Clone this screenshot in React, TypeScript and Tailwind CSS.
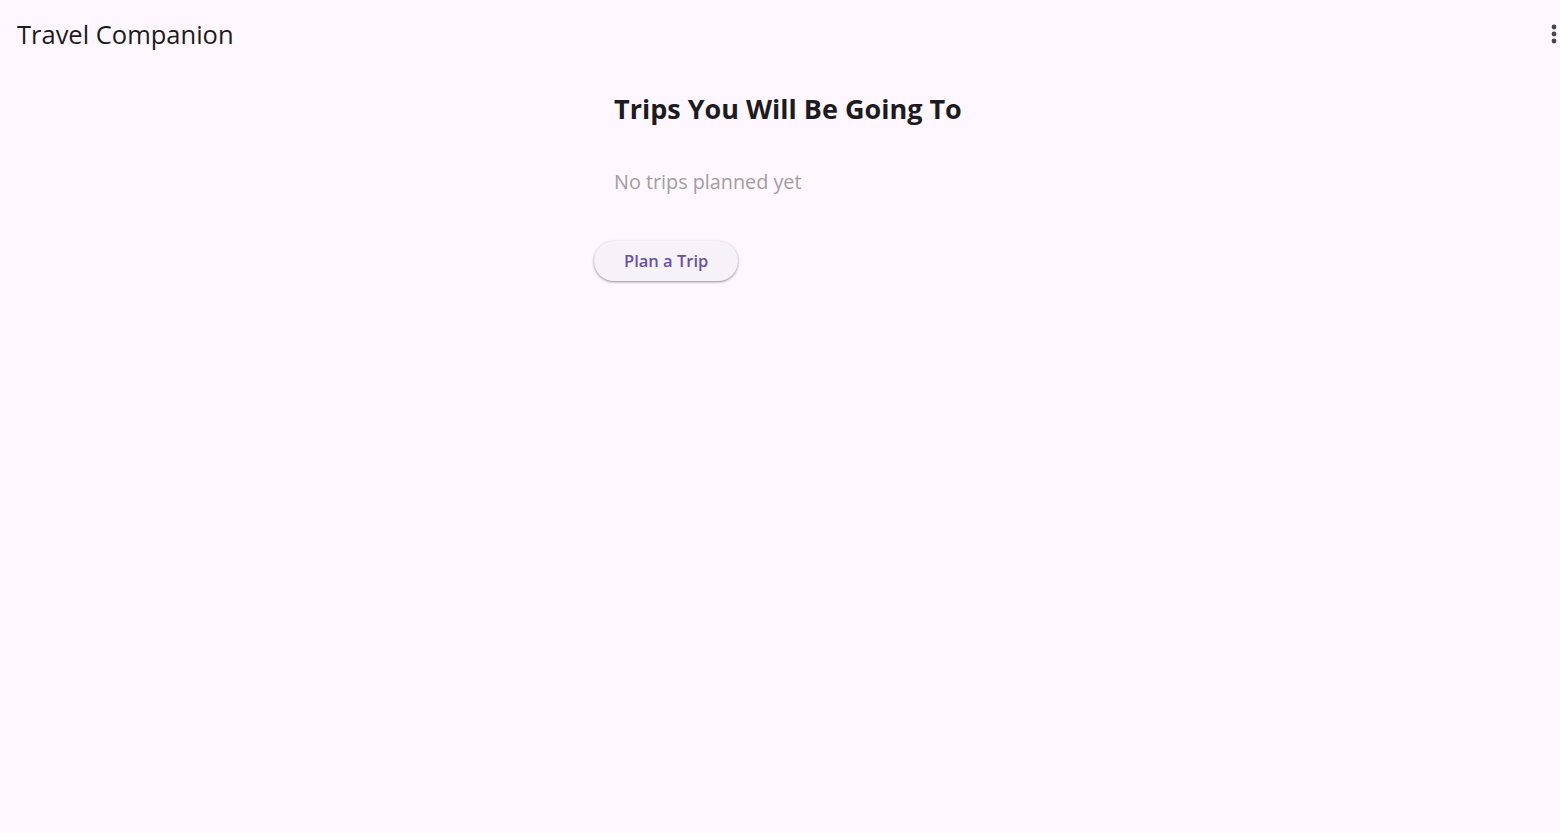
import React from 'react';

const MoreVert: React.FC = () => (
  <svg width="24" height="24" viewBox="0 0 24 24" className="fill-[#49454f]">
    <circle cx="12" cy="5" r="2.4" />
    <circle cx="12" cy="12" r="2.4" />
    <circle cx="12" cy="19" r="2.4" />
  </svg>
);

export default function App() {
  return (
    <div className="min-h-[833px] w-full overflow-hidden bg-[#fef7ff] text-[#1d1b20] font-['Open_Sans',sans-serif]">
      {/* app bar */}
      <header className="flex h-[64px] items-center justify-between pl-[17px] pr-0">
        <h1 className="mt-[5px] text-[25.5px] leading-none">Travel Companion</h1>
        <button className="mr-[-6px] mt-[4px] flex h-[24px] w-[24px] items-center justify-center">
          <MoreVert />
        </button>
      </header>

      {/* body */}
      <main className="flex flex-col items-start pl-[594px]">
        <div className="pl-[20px] pt-[27px]">
          <h2 className="text-[27px] font-bold leading-[36px]">Trips You Will Be Going To</h2>
          <p className="mt-[43px] text-[19.8px] leading-[24px] text-[#9e9e9e]">No trips planned yet</p>
        </div>
        <button className="mt-[47px] h-[40px] rounded-full bg-[#f7f2fa] px-[30px] text-[16.5px] font-semibold text-[#6750a4] shadow-[0_1px_2px_rgba(0,0,0,0.3),0_1px_3px_1px_rgba(0,0,0,0.1)]">
          Plan a Trip
        </button>
      </main>
    </div>
  );
}
